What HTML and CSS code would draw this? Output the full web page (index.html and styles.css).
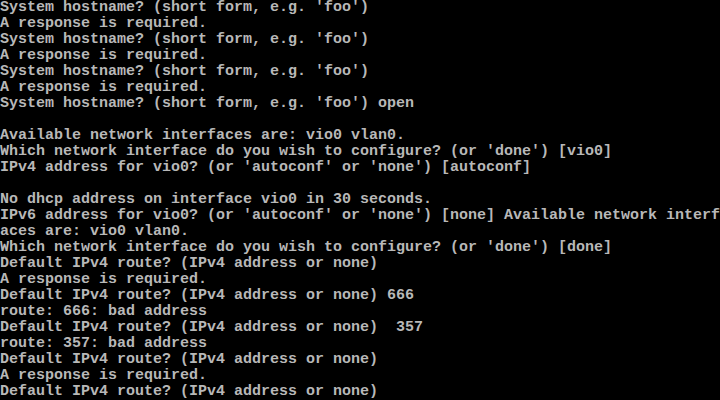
FILE: index.html
```html
<!DOCTYPE html>
<html>
<head>
<meta charset="utf-8">
<link rel="stylesheet" href="styles.css">
</head>
<body>
<pre class="console">System hostname? (short form, e.g. 'foo')
A response is required.
System hostname? (short form, e.g. 'foo')
A response is required.
System hostname? (short form, e.g. 'foo')
A response is required.
System hostname? (short form, e.g. 'foo') open

Available network interfaces are: vio0 vlan0.
Which network interface do you wish to configure? (or 'done') [vio0]
IPv4 address for vio0? (or 'autoconf' or 'none') [autoconf]

No dhcp address on interface vio0 in 30 seconds.
IPv6 address for vio0? (or 'autoconf' or 'none') [none] Available network interf
aces are: vio0 vlan0.
Which network interface do you wish to configure? (or 'done') [done]
Default IPv4 route? (IPv4 address or none)
A response is required.
Default IPv4 route? (IPv4 address or none) 666
route: 666: bad address
Default IPv4 route? (IPv4 address or none)  357
route: 357: bad address
Default IPv4 route? (IPv4 address or none)
A response is required.
Default IPv4 route? (IPv4 address or none)</pre>
</body>
</html>
```

FILE: styles.css
```css
html, body {
  margin: 0;
  padding: 0;
  background: #000;
  width: 720px;
  height: 400px;
  overflow: hidden;
}
.console {
  margin: 0;
  padding: 0;
  font-family: "Liberation Mono", "DejaVu Sans Mono", monospace;
  font-size: 15px;
  line-height: 16px;
  font-weight: bold;
  color: #b8b8b8;
  white-space: pre;
  -webkit-font-smoothing: none;
}
```
